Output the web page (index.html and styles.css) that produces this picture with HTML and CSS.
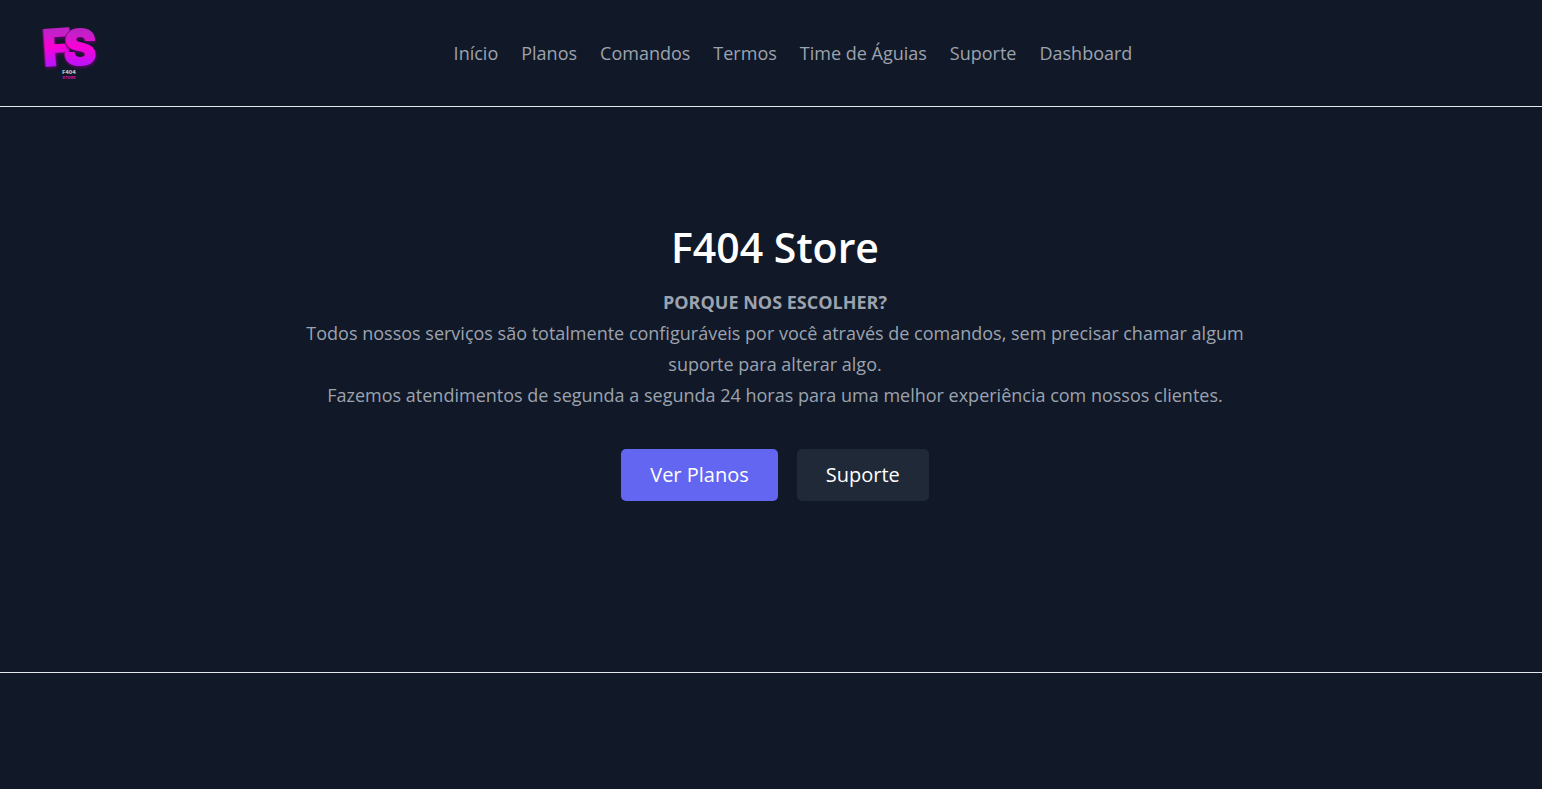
FILE: index.html
```html
<!DOCTYPE html>
<html lang="pt-BR">
<head>
<meta charset="utf-8">
<meta name="viewport" content="width=device-width, initial-scale=1">
<title>F404 Store</title>
<link rel="stylesheet" href="styles.css">
</head>
<body>
<header class="header">
  <a class="brand" href="#" aria-label="F404 Store">
    <svg class="logo" viewBox="0 0 62 62" aria-hidden="true">
      <defs>
        <linearGradient id="neon" gradientUnits="userSpaceOnUse" x1="0" y1="4" x2="0" y2="45">
          <stop offset="0" stop-color="#b822be"/>
          <stop offset=".2" stop-color="#c51fc9"/>
          <stop offset=".5" stop-color="#fb00d4"/>
          <stop offset="1" stop-color="#b416ff"/>
        </linearGradient>
      </defs>
      <text class="logo-letter" x="6" y="44" transform="rotate(-4 6 44)">F</text>
      <text class="logo-letter" x="26" y="43">S</text>
      <text class="logo-small" x="31" y="52">F404</text>
      <text class="logo-small logo-pink" x="31" y="57">STORE</text>
    </svg>
  </a>
  <nav class="nav">
    <a href="#">Início</a>
    <a href="#">Planos</a>
    <a href="#">Comandos</a>
    <a href="#">Termos</a>
    <a href="#">Time de Águias</a>
    <a href="#">Suporte</a>
    <a href="#">Dashboard</a>
  </nav>
</header>
<main class="hero">
  <h1 class="title">F404 Store</h1>
  <p class="lead"><strong>PORQUE NOS ESCOLHER?</strong><br>
  Todos nossos serviços são totalmente configuráveis por você através de comandos, sem precisar chamar algum suporte para alterar algo.<br>
  Fazemos atendimentos de segunda a segunda 24 horas para uma melhor experiência com nossos clientes.</p>
  <div class="actions">
    <button class="button primary" type="button">Ver Planos</button>
    <button class="button" type="button">Suporte</button>
  </div>
</main>
<footer class="footer"></footer>
</body>
</html>
```

FILE: styles.css
```css
* {
  box-sizing: border-box;
}

body {
  margin: 0;
  min-height: 100vh;
  display: flex;
  flex-direction: column;
  background: #111827;
  color: #9ca3af;
  font-family: "Segoe UI", "Open Sans", sans-serif;
  font-size: 18px;
  line-height: 31px;
}

.header {
  display: grid;
  grid-template-columns: 1fr auto 1fr;
  align-items: center;
  padding: 22px 38px;
  border-bottom: 1px solid #e5e7eb;
}

.brand {
  justify-self: start;
  display: flex;
}

.logo {
  width: 62px;
  height: 62px;
  overflow: visible;
}

.logo-letter {
  font-family: Inter, sans-serif;
  font-weight: 800;
  font-size: 49px;
  fill: url(#neon);
  stroke: url(#neon);
  stroke-width: 2;
  stroke-linejoin: round;
  filter: drop-shadow(-1px 0 0 #74106f) drop-shadow(1px 2px 1px #4d0a5c);
}

.logo-small {
  font-family: Inter, sans-serif;
  font-weight: 900;
  font-size: 5px;
  text-anchor: middle;
  fill: #b9bcc4;
}

.logo-pink {
  font-size: 4px;
  fill: #b0148f;
}

.nav {
  display: flex;
  gap: 23px;
  padding-left: 44px;
}

.nav a {
  color: inherit;
  text-decoration: none;
}

.hero {
  flex: 1;
  display: flex;
  flex-direction: column;
  align-items: center;
  padding: 112px 24px 112px 32px;
  text-align: center;
}

.title {
  margin: 0 0 12px;
  color: #fff;
  font-size: 41px;
  font-weight: 600;
  line-height: 56px;
}

.lead {
  max-width: 960px;
  margin: 0 0 38px;
}

.actions {
  display: flex;
  gap: 19px;
}

.button {
  padding: 10px 29px;
  border: 0;
  border-radius: 5px;
  background: #1f2937;
  color: #fff;
  font: inherit;
  font-size: 20px;
  line-height: 32px;
}

.primary {
  background: #6366f1;
}

.footer {
  height: 117px;
  border-top: 1px solid #e5e7eb;
}
```
